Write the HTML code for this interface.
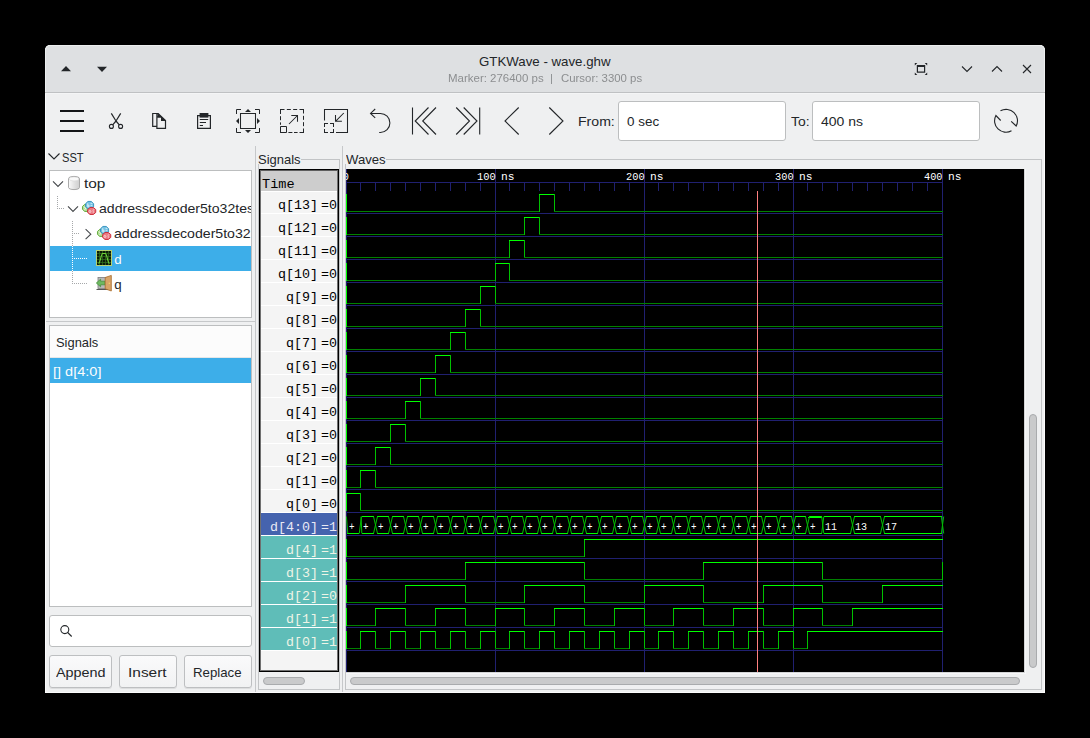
<!DOCTYPE html>
<html lang="en"><head><meta charset="utf-8"><title>GTKWave - wave.ghw</title>
<style>
html,body{margin:0;padding:0;background:#000;}
body{width:1090px;height:738px;position:relative;overflow:hidden;font-family:"Liberation Sans",sans-serif;color:#232629;}
.abs{position:absolute;}
.win{position:absolute;left:45px;top:45px;width:1000px;height:648px;background:#eff0f1;border-radius:5px 5px 0 0;overflow:hidden;}
.titlebar{position:absolute;left:0;top:0;width:1000px;height:47px;background:#dee0e2;border-bottom:1px solid #bfc1c3;box-shadow:inset 0 1px 0 #eceeef, inset 1px 0 0 #eceeef, inset -1px 0 0 #eceeef;border-radius:5px 5px 0 0;box-sizing:border-box;height:48px;}
.t{position:absolute;white-space:pre;line-height:20px;height:20px;transform-origin:0 0;}
.fm{font-family:"Liberation Mono",monospace;}
.box{position:absolute;background:#fff;border:1px solid #bcbebf;box-sizing:border-box;}
.entry{position:absolute;background:#fff;border:1px solid #bcbebf;border-radius:3px;box-sizing:border-box;}
.btn{position:absolute;box-sizing:border-box;border:1px solid #bdbfc1;border-radius:3px;background:linear-gradient(#fafafb,#f1f2f3);box-shadow:0 1px 0 rgba(0,0,0,0.08);}
.sel{position:absolute;background:#3daee9;}
.thumb{position:absolute;box-sizing:border-box;background:#c9cacb;border:1px solid #a9abad;border-radius:4px;}
.ln{position:absolute;background:#c4c6c8;}
svg{position:absolute;overflow:visible;}
</style></head><body>
<div class="win"><div class="titlebar"></div></div>
<span class="t" style="left:478.88px;top:52.00px;font-size:13.3px;color:#232629;transform:scale(0.9981,1.0000);">GTKWave - wave.ghw</span>
<svg width="1090" height="738" viewBox="0 0 1090 738" style="left:0;top:0" fill="none" stroke="#232629" stroke-width="1.1">
<path d="M61 71.2 L66 66 L71 71.2 Z" fill="#232629" stroke="none"/>
<path d="M97 66.8 L107 66.8 L102 72 Z" fill="#232629" stroke="none"/>
<path d="M914.8 63 H917.3 L914.8 65.5 Z M927.2 63 H924.7 L927.2 65.5 Z M914.8 75 H917.3 L914.8 72.5 Z M927.2 75 H924.7 L927.2 72.5 Z" fill="#232629" stroke="none"/>
<path d="M917.4 65.5 H924.6 V72.2 H917.4 Z M917.4 66.3 H924.6" stroke-width="1.2"/>
<path d="M962 66.5 L967 71.5 L972 66.5"/>
<path d="M992 71.5 L997 66.5 L1002 71.5"/>
<path d="M1023 65 L1031 73 M1031 65 L1023 73"/>
<path d="M60 110.9 H84 M60 120.9 H84 M60 130.9 H84" stroke-width="2" stroke="#141618"/>
<path d="M111.3 113.4 L116 121 L119.3 124.9 M120.7 113.4 L116 121 L112.7 124.9" stroke-width="1.2" stroke-linejoin="round"/>
<circle cx="111.4" cy="126.4" r="2" stroke-width="1.1"/><circle cx="120.6" cy="126.4" r="2" stroke-width="1.1"/>
<path d="M156.5 126.4 H152.7 V113.5 H158.2 L165.5 120.6 V128.4 H156.9 V113.6 M156.9 116.9 H161.2" stroke-width="1.2"/>
<path d="M157.4 113.1 L166 121.1 H161 V117.5 H157.4 Z" fill="#232629" stroke="none"/>
<path d="M197.6 115.6 H210.4 V128.4 H197.6 Z" stroke-width="1.2"/>
<path d="M199.6 113 H208.4 V117.6 H199.6 Z" fill="#232629" stroke="none"/>
<path d="M199.8 119.5 H208.2 M199.8 122.5 H206 M199.8 125.5 H203" stroke-width="1"/>
<path d="M236.5 114 V109.5 H241 M255 109.5 H259.5 V114 M259.5 128 V132.5 H255 M241 132.5 H236.5 V128" stroke-width="1"/>
<path d="M240.5 113.5 H255.5 V128.5 H240.5 Z" stroke-width="1.05"/>
<path d="M245 112 L248 109 L251 112 Z M245 130 L248 133 L251 130 Z M239 118 L236 121 L239 124 Z M257 118 L260 121 L257 124 Z" fill="#232629" stroke="none"/>
<path d="M280.5 109.5 H303.5 M303.5 109.5 V132.5" stroke-dasharray="4 2.333" stroke-width="1" stroke-linecap="butt"/>
<path d="M280.5 109.5 V114 M280.5 116.2 V120.2 M280.5 122.4 V124.8 M288.4 132.5 H292.4 M294 132.5 H297.6 M299.5 132.5 H303.5" stroke-width="1"/>
<path d="M280 109.5 H281 M303 109.5 H304 M280 132.5 H281 M303 132.5 H304" stroke-width="1"/>
<path d="M280.5 126.5 H286.5 V132.5 H280.5 Z" stroke-width="1" fill="#eff0f1"/>
<path d="M289 124 L297.5 115.5 M291.3 115.5 H297.5 V121.7" stroke-width="1.05"/>
<path d="M324.5 120.6 V109.5 H347.5 V132.5 H336" stroke-width="1.05"/>
<path d="M324.5 123.5 H333.5 M333.5 123.5 V132.5 M333.5 132.5 H324.5 M324.5 132.5 V123.5" stroke-dasharray="3.5 2" stroke-width="1"/>
<path d="M324 123.5 H325 M333 123.5 H334 M324 132.5 H325 M333 132.5 H334" stroke-width="1"/>
<path d="M343.8 113 L335.5 121.3 M335.5 115.1 V121.3 H341.9" stroke-width="1.05"/>
<path d="M375.2 109 L370.5 113.4 L375.2 117.8 M371 113.4 H380.4 A9.5 9.5 0 0 1 380.4 132.4 H379.2" stroke-width="1.05"/>
<path d="M412.5 107.5 V134.5 M428.5 107.5 L415.2 121 L428.5 134.5 M436 107.5 L422.7 121 L436 134.5" stroke-width="1.1"/>
<path d="M479.7 107.5 V134.5 M463.7 107.5 L477 121 L463.7 134.5 M456.2 107.5 L469.5 121 L456.2 134.5" stroke-width="1.1"/>
<path d="M518.7 107.5 L505 121 L518.7 134.5" stroke-width="1.1"/>
<path d="M549.3 107.5 L563 121 L549.3 134.5" stroke-width="1.1"/>
<path d="M1000.5 110.8 A11.4 11.4 0 0 1 1016.2 126 L1011.2 121.3 M1011.5 130.8 A11.4 11.4 0 0 1 995.9 115.5 L1000.7 120.5" stroke-width="1.1" stroke-linejoin="miter"/>
</svg>
<span class="t" style="left:578.41px;top:112.00px;font-size:13.3px;color:#232629;transform:scale(1.0595,1.0000);">From:</span>
<div class="entry" style="left:618px;top:101px;width:168px;height:40px"></div>
<span class="t" style="left:626.89px;top:112.00px;font-size:13.3px;color:#232629;transform:scale(1.0105,1.0000);">0 sec</span>
<span class="t" style="left:791.04px;top:112.00px;font-size:13.3px;color:#232629;transform:scale(1.0462,1.0000);">To:</span>
<div class="entry" style="left:812px;top:101px;width:168px;height:40px"></div>
<span class="t" style="left:820.94px;top:112.00px;font-size:13.3px;color:#232629;transform:scale(1.0530,1.0000);">400 ns</span>
<svg width="1090" height="738" viewBox="0 0 1090 738" style="left:0;top:0" fill="none" stroke="#232629" stroke-width="1.1">
<path d="M48.5 153.5 L54 159 L59.5 153.5"/>
</svg>
<span class="t" style="left:61.88px;top:148.00px;font-size:13.3px;color:#232629;transform:scale(0.8362,1.0000);">SST</span>
<div class="box" style="left:49px;top:170px;width:203px;height:148px;overflow:hidden">
</div>
<div class="sel" style="left:50px;top:246px;width:201px;height:25px"></div>
<svg width="1090" height="738" viewBox="0 0 1090 738" style="left:0;top:0" fill="none">
<path d="M57.5 196 V209" stroke="#a6a8aa" stroke-width="1" stroke-dasharray="1 1" shape-rendering="crispEdges"/>
<path d="M57 208.5 H65" stroke="#a6a8aa" stroke-width="1" stroke-dasharray="1 1" shape-rendering="crispEdges"/>
<path d="M72.5 221 V246" stroke="#a6a8aa" stroke-width="1" stroke-dasharray="1 1" shape-rendering="crispEdges"/>
<path d="M72.5 271 V284" stroke="#a6a8aa" stroke-width="1" stroke-dasharray="1 1" shape-rendering="crispEdges"/>
<path d="M72.5 246 V271" stroke="#ffffff" stroke-width="1" stroke-dasharray="1 1" shape-rendering="crispEdges"/>
<path d="M72 233.5 H80" stroke="#a6a8aa" stroke-width="1" stroke-dasharray="1 1" shape-rendering="crispEdges"/>
<path d="M72 258.5 H88" stroke="#ffffff" stroke-width="1" stroke-dasharray="1 1" shape-rendering="crispEdges"/>
<path d="M72 283.5 H88" stroke="#a6a8aa" stroke-width="1" stroke-dasharray="1 1" shape-rendering="crispEdges"/>
<path d="M53 181.3 L58 186.5 L63 181.3 M68 206.3 L73 211.5 L78 206.3 M85.6 229.2 L90.8 234.2 L85.6 239.2" stroke="#45484b" stroke-width="1.1"/>
<defs><linearGradient id="cyl" x1="0" x2="1" y1="0" y2="0"><stop offset="0" stop-color="#fbfbfb"/><stop offset="0.6" stop-color="#dedede"/><stop offset="1" stop-color="#cfcfcf"/></linearGradient></defs>
<path d="M68.5 178.6 C68.5 175.7 79.5 175.7 79.5 178.6 V187.4 C79.5 190.3 68.5 190.3 68.5 187.4 Z" fill="url(#cyl)" stroke="#9c9c9c" stroke-width="0.85"/>
<ellipse cx="74" cy="178.9" rx="4.8" ry="2" fill="#fafafa" stroke="#cfcfcf" stroke-width="0.5"/>
<polygon points="90.12,209.36 87.88,211.43 84.72,211.43 82.48,209.36 82.48,206.44 84.72,204.37 87.88,204.37 90.12,206.44" fill="#b2df97" stroke="#5aa532" stroke-width="0.9" stroke-linejoin="round"/><path d="M84.2 206.6 l1.6 2.2 M84.6 209.9 l1.2 -1.6" stroke="#eef8e6" stroke-width="0.9" fill="none"/><polygon points="93.62,206.83 91.26,209.07 87.94,209.07 85.58,206.83 85.58,203.67 87.94,201.43 91.26,201.43 93.62,203.67" fill="#74c2e4" stroke="#2e8dbb" stroke-width="0.9" stroke-linejoin="round"/><path d="M87.7 203.2 v3.6 M87.7 205.2 h1.3 v1.6 h-1.3 M90.6 203.4 h1.8 M90.6 205.4 h1.8" stroke="#e4f3fa" stroke-width="0.8" fill="none"/><polygon points="95.76,212.44 93.38,214.48 90.02,214.48 87.64,212.44 87.64,209.56 90.02,207.52 93.38,207.52 95.76,209.56" fill="#ed7a83" stroke="#c8232f" stroke-width="0.9" stroke-linejoin="round"/><circle cx="89.9" cy="211.5" r="1.0" stroke="#fbdfe1" stroke-width="0.8" fill="none"/><path d="M92.6 210.4 l1.6 -0.8 M93.3 211.2 v1.6" stroke="#fbdfe1" stroke-width="0.8" fill="none"/>
<polygon points="105.12,234.36 102.88,236.43 99.72,236.43 97.48,234.36 97.48,231.44 99.72,229.37 102.88,229.37 105.12,231.44" fill="#b2df97" stroke="#5aa532" stroke-width="0.9" stroke-linejoin="round"/><path d="M99.2 231.6 l1.6 2.2 M99.6 234.9 l1.2 -1.6" stroke="#eef8e6" stroke-width="0.9" fill="none"/><polygon points="108.62,231.83 106.26,234.07 102.94,234.07 100.58,231.83 100.58,228.67 102.94,226.43 106.26,226.43 108.62,228.67" fill="#74c2e4" stroke="#2e8dbb" stroke-width="0.9" stroke-linejoin="round"/><path d="M102.7 228.2 v3.6 M102.7 230.2 h1.3 v1.6 h-1.3 M105.6 228.4 h1.8 M105.6 230.4 h1.8" stroke="#e4f3fa" stroke-width="0.8" fill="none"/><polygon points="110.76,237.44 108.38,239.48 105.02,239.48 102.64,237.44 102.64,234.56 105.02,232.52 108.38,232.52 110.76,234.56" fill="#ed7a83" stroke="#c8232f" stroke-width="0.9" stroke-linejoin="round"/><circle cx="104.9" cy="236.5" r="1.0" stroke="#fbdfe1" stroke-width="0.8" fill="none"/><path d="M107.6 235.4 l1.6 -0.8 M108.3 236.2 v1.6" stroke="#fbdfe1" stroke-width="0.8" fill="none"/>
<rect x="96.5" y="250.5" width="15" height="15" fill="#0c1a08" stroke="#b4d070" stroke-width="1"/>
<path d="M99.5 251 V265 M97 253.5 H111 M102.5 251 V265 M97 256.5 H111 M105.5 251 V265 M97 259.5 H111 M108.5 251 V265 M97 262.5 H111" stroke="#2f6a1c" stroke-width="0.8"/>
<path d="M98.5 263.5 C100.5 263 101 254 102.5 253.5 H105.5 C107 254 107.5 263 109.5 263.5" stroke="#6fd23a" stroke-width="1.1"/>
<rect x="98" y="277.5" width="9" height="11" fill="#b9b9b9" stroke="#7d7d7d" stroke-width="0.8"/>
<path d="M96.5 289.5 H108" stroke="#555" stroke-width="1"/>
<path d="M96.3 283 L100.6 279.2 V281.2 H105 V284.8 H100.6 V286.8 Z" fill="#6db860" stroke="#3f8c35" stroke-width="0.7"/>
<path d="M105.2 277.5 L111.3 275.4 V291 L105.2 288.8 Z" fill="#d8a468" stroke="#a76a2a" stroke-width="0.8"/>
<circle cx="109.3" cy="283.3" r="0.7" fill="#f6d36a"/>
</svg>
<span class="t" style="left:84.11px;top:174.40px;font-size:13.3px;color:#232629;transform:scale(1.1606,1.0000);">top</span>
<div class="abs" style="left:50px;top:171px;width:201px;height:146px;overflow:hidden">
<span class="t" style="left:48.97px;top:28.40px;font-size:13.3px;color:#232629;transform:scale(1.0595,1.0000);">addressdecoder5to32test</span>
<span class="t" style="left:63.97px;top:53.40px;font-size:13.3px;color:#232629;transform:scale(1.0627,1.0000);">addressdecoder5to32</span>
</div>
<span class="t" style="left:114.30px;top:250.00px;font-size:13.3px;color:#fcfcfc;">d</span>
<span class="t" style="left:114.30px;top:275.00px;font-size:13.3px;color:#232629;">q</span>
<div class="ln" style="left:46px;top:321px;width:209px;height:1px;background:#c6c8ca"></div>
<div class="box" style="left:49px;top:325px;width:203px;height:282px"></div>
<div class="abs" style="left:50px;top:326px;width:201px;height:31px;background:#fcfcfc;border-bottom:1px solid #e6e7e8"></div>
<span class="t" style="left:55.99px;top:333.00px;font-size:13.3px;color:#232629;transform:scale(0.9694,1.0000);">Signals</span>
<div class="sel" style="left:50px;top:358px;width:201px;height:25px"></div>
<span class="t" style="left:52.94px;top:362.00px;font-size:13.3px;color:#fcfcfc;transform:scale(1.0918,1.0000);">[] d[4:0]</span>
<div class="entry" style="left:49px;top:615px;width:203px;height:32px"></div>
<svg width="1090" height="738" viewBox="0 0 1090 738" style="left:0;top:0" fill="none" stroke="#232629" stroke-width="1.1"><circle cx="64.8" cy="629.6" r="4"/><path d="M67.7 632.5 L71.7 636.5"/></svg>
<div class="btn" style="left:49px;top:655px;width:63px;height:33px"></div>
<span class="t" style="left:56.20px;top:662.60px;font-size:13.3px;color:#232629;transform:scale(1.0822,1.0000);">Append</span>
<div class="btn" style="left:119px;top:655px;width:58px;height:33px"></div>
<span class="t" style="left:128.05px;top:662.60px;font-size:13.3px;color:#232629;transform:scale(1.1625,1.0000);">Insert</span>
<div class="btn" style="left:184px;top:655px;width:68px;height:33px"></div>
<span class="t" style="left:193.28px;top:662.60px;font-size:13.3px;color:#232629;transform:scale(0.9957,1.0000);">Replace</span>
<div class="ln" style="left:255px;top:146px;width:1px;height:547px;background:#c6c8ca"></div>
<div class="ln" style="left:342px;top:146px;width:1px;height:547px;background:#c6c8ca"></div>
<span class="t" style="left:257.99px;top:150.00px;font-size:13.3px;color:#232629;transform:scale(0.9765,1.0000);">Signals</span>
<div class="ln" style="left:301px;top:159px;width:39px;height:1px;background:#c2c4c6"></div>
<div class="ln" style="left:258px;top:164px;width:1px;height:526px;background:#c2c4c6"></div>
<div class="ln" style="left:339px;top:159px;width:1px;height:531px;background:#c2c4c6"></div>
<div class="ln" style="left:258px;top:689px;width:82px;height:1px;background:#c2c4c6"></div>
<div class="abs" style="left:259px;top:169px;width:80px;height:503px;box-sizing:border-box;border:1px solid #000;background:#f4f4f4"></div>
<div class="abs" style="left:260px;top:170px;width:78px;height:501px;box-sizing:border-box;border:1px solid #707070;border-top-color:#5e5e5e"></div>
<div class="abs" style="left:261px;top:171px;width:76px;height:20px;background:#cdcdcd"></div>
<div class="abs" style="left:261px;top:191px;width:76px;height:1px;background:#fff"></div>
<span class="t fm" style="left:261.89px;top:175.00px;font-size:13.33px;color:#000;transform:scale(1.0188,1.0000);">Time</span>
<div class="abs" style="left:261px;top:213px;width:76px;height:1px;background:#fff"></div>
<span class="t fm" style="left:278.02px;top:196.00px;font-size:13.33px;color:#000;">q[13]</span>
<span class="t fm" style="left:320.95px;top:196.00px;font-size:13.33px;color:#000;">=0</span>
<div class="abs" style="left:261px;top:236px;width:76px;height:1px;background:#fff"></div>
<span class="t fm" style="left:278.02px;top:219.00px;font-size:13.33px;color:#000;">q[12]</span>
<span class="t fm" style="left:320.95px;top:219.00px;font-size:13.33px;color:#000;">=0</span>
<div class="abs" style="left:261px;top:259px;width:76px;height:1px;background:#fff"></div>
<span class="t fm" style="left:278.02px;top:242.00px;font-size:13.33px;color:#000;">q[11]</span>
<span class="t fm" style="left:320.95px;top:242.00px;font-size:13.33px;color:#000;">=0</span>
<div class="abs" style="left:261px;top:282px;width:76px;height:1px;background:#fff"></div>
<span class="t fm" style="left:278.02px;top:265.00px;font-size:13.33px;color:#000;">q[10]</span>
<span class="t fm" style="left:320.95px;top:265.00px;font-size:13.33px;color:#000;">=0</span>
<div class="abs" style="left:261px;top:305px;width:76px;height:1px;background:#fff"></div>
<span class="t fm" style="left:286.02px;top:288.00px;font-size:13.33px;color:#000;">q[9]</span>
<span class="t fm" style="left:320.95px;top:288.00px;font-size:13.33px;color:#000;">=0</span>
<div class="abs" style="left:261px;top:328px;width:76px;height:1px;background:#fff"></div>
<span class="t fm" style="left:286.02px;top:311.00px;font-size:13.33px;color:#000;">q[8]</span>
<span class="t fm" style="left:320.95px;top:311.00px;font-size:13.33px;color:#000;">=0</span>
<div class="abs" style="left:261px;top:351px;width:76px;height:1px;background:#fff"></div>
<span class="t fm" style="left:286.02px;top:334.00px;font-size:13.33px;color:#000;">q[7]</span>
<span class="t fm" style="left:320.95px;top:334.00px;font-size:13.33px;color:#000;">=0</span>
<div class="abs" style="left:261px;top:374px;width:76px;height:1px;background:#fff"></div>
<span class="t fm" style="left:286.02px;top:357.00px;font-size:13.33px;color:#000;">q[6]</span>
<span class="t fm" style="left:320.95px;top:357.00px;font-size:13.33px;color:#000;">=0</span>
<div class="abs" style="left:261px;top:397px;width:76px;height:1px;background:#fff"></div>
<span class="t fm" style="left:286.02px;top:380.00px;font-size:13.33px;color:#000;">q[5]</span>
<span class="t fm" style="left:320.95px;top:380.00px;font-size:13.33px;color:#000;">=0</span>
<div class="abs" style="left:261px;top:420px;width:76px;height:1px;background:#fff"></div>
<span class="t fm" style="left:286.02px;top:403.00px;font-size:13.33px;color:#000;">q[4]</span>
<span class="t fm" style="left:320.95px;top:403.00px;font-size:13.33px;color:#000;">=0</span>
<div class="abs" style="left:261px;top:443px;width:76px;height:1px;background:#fff"></div>
<span class="t fm" style="left:286.02px;top:426.00px;font-size:13.33px;color:#000;">q[3]</span>
<span class="t fm" style="left:320.95px;top:426.00px;font-size:13.33px;color:#000;">=0</span>
<div class="abs" style="left:261px;top:466px;width:76px;height:1px;background:#fff"></div>
<span class="t fm" style="left:286.02px;top:449.00px;font-size:13.33px;color:#000;">q[2]</span>
<span class="t fm" style="left:320.95px;top:449.00px;font-size:13.33px;color:#000;">=0</span>
<div class="abs" style="left:261px;top:489px;width:76px;height:1px;background:#fff"></div>
<span class="t fm" style="left:286.02px;top:472.00px;font-size:13.33px;color:#000;">q[1]</span>
<span class="t fm" style="left:320.95px;top:472.00px;font-size:13.33px;color:#000;">=0</span>
<div class="abs" style="left:261px;top:512px;width:76px;height:1px;background:#fff"></div>
<span class="t fm" style="left:286.02px;top:495.00px;font-size:13.33px;color:#000;">q[0]</span>
<span class="t fm" style="left:320.95px;top:495.00px;font-size:13.33px;color:#000;">=0</span>
<div class="abs" style="left:261px;top:513px;width:76px;height:22px;background:#4563ae"></div>
<div class="abs" style="left:261px;top:535px;width:76px;height:1px;background:#fff"></div>
<span class="t fm" style="left:270.02px;top:518.00px;font-size:13.33px;color:#e8e8f4;">d[4:0]</span>
<span class="t fm" style="left:320.96px;top:518.00px;font-size:13.33px;color:#e8e8f4;transform:scale(0.9915,1.0000);">=1</span>
<div class="abs" style="left:261px;top:536px;width:76px;height:22px;background:#5fbdb8"></div>
<div class="abs" style="left:261px;top:558px;width:76px;height:1px;background:#fff"></div>
<span class="t fm" style="left:286.02px;top:541.00px;font-size:13.33px;color:#eef4e6;">d[4]</span>
<span class="t fm" style="left:320.96px;top:541.00px;font-size:13.33px;color:#eef4e6;transform:scale(0.9915,1.0000);">=1</span>
<div class="abs" style="left:261px;top:559px;width:76px;height:22px;background:#5fbdb8"></div>
<div class="abs" style="left:261px;top:581px;width:76px;height:1px;background:#fff"></div>
<span class="t fm" style="left:286.02px;top:564.00px;font-size:13.33px;color:#eef4e6;">d[3]</span>
<span class="t fm" style="left:320.96px;top:564.00px;font-size:13.33px;color:#eef4e6;transform:scale(0.9915,1.0000);">=1</span>
<div class="abs" style="left:261px;top:582px;width:76px;height:22px;background:#5fbdb8"></div>
<div class="abs" style="left:261px;top:604px;width:76px;height:1px;background:#fff"></div>
<span class="t fm" style="left:286.02px;top:587.00px;font-size:13.33px;color:#eef4e6;">d[2]</span>
<span class="t fm" style="left:320.95px;top:587.00px;font-size:13.33px;color:#eef4e6;">=0</span>
<div class="abs" style="left:261px;top:605px;width:76px;height:22px;background:#5fbdb8"></div>
<div class="abs" style="left:261px;top:627px;width:76px;height:1px;background:#fff"></div>
<span class="t fm" style="left:286.02px;top:610.00px;font-size:13.33px;color:#eef4e6;">d[1]</span>
<span class="t fm" style="left:320.96px;top:610.00px;font-size:13.33px;color:#eef4e6;transform:scale(0.9915,1.0000);">=1</span>
<div class="abs" style="left:261px;top:628px;width:76px;height:22px;background:#5fbdb8"></div>
<div class="abs" style="left:261px;top:650px;width:76px;height:1px;background:#fff"></div>
<span class="t fm" style="left:286.02px;top:633.00px;font-size:13.33px;color:#eef4e6;">d[0]</span>
<span class="t fm" style="left:320.96px;top:633.00px;font-size:13.33px;color:#eef4e6;transform:scale(0.9915,1.0000);">=1</span>
<div class="thumb" style="left:263px;top:677px;width:42px;height:8px"></div>
<span class="t" style="left:346.08px;top:150.00px;font-size:13.3px;color:#232629;transform:scale(0.9873,1.0000);">Waves</span>
<div class="ln" style="left:386px;top:159px;width:656px;height:1px;background:#c2c4c6"></div>
<div class="ln" style="left:345px;top:164px;width:1px;height:526px;background:#c2c4c6"></div>
<div class="ln" style="left:1041px;top:159px;width:1px;height:531px;background:#c2c4c6"></div>
<div class="ln" style="left:345px;top:689px;width:697px;height:1px;background:#c2c4c6"></div>
<div class="thumb" style="left:350px;top:677px;width:670px;height:8px"></div>
<div class="thumb" style="left:1029px;top:414px;width:8px;height:254px"></div>
<div class="abs" style="left:346px;top:169px;width:680px;height:505px;background:#f6f7f8"></div>
<div class="abs" style="left:346px;top:169px;width:679px;height:504px;background:#d4d5d6"></div>
<svg width="678" height="503" viewBox="346 169 678 503" style="left:346px;top:169px;overflow:hidden" shape-rendering="crispEdges">
<rect x="346" y="169" width="678" height="503" fill="#000"/>
<rect x="346" y="182" width="597" height="1" fill="#202070"/>
<rect x="346" y="169" width="1" height="503" fill="#202070"/>
<rect x="360" y="182" width="1" height="9" fill="#202070"/>
<rect x="375" y="182" width="1" height="9" fill="#202070"/>
<rect x="390" y="182" width="1" height="9" fill="#202070"/>
<rect x="405" y="182" width="1" height="9" fill="#202070"/>
<rect x="420" y="182" width="1" height="9" fill="#202070"/>
<rect x="435" y="182" width="1" height="9" fill="#202070"/>
<rect x="450" y="182" width="1" height="9" fill="#202070"/>
<rect x="465" y="182" width="1" height="9" fill="#202070"/>
<rect x="480" y="182" width="1" height="9" fill="#202070"/>
<rect x="495" y="169" width="1" height="503" fill="#202070"/>
<rect x="509" y="182" width="1" height="9" fill="#202070"/>
<rect x="524" y="182" width="1" height="9" fill="#202070"/>
<rect x="539" y="182" width="1" height="9" fill="#202070"/>
<rect x="554" y="182" width="1" height="9" fill="#202070"/>
<rect x="569" y="182" width="1" height="9" fill="#202070"/>
<rect x="584" y="182" width="1" height="9" fill="#202070"/>
<rect x="599" y="182" width="1" height="9" fill="#202070"/>
<rect x="614" y="182" width="1" height="9" fill="#202070"/>
<rect x="629" y="182" width="1" height="9" fill="#202070"/>
<rect x="644" y="169" width="1" height="503" fill="#202070"/>
<rect x="658" y="182" width="1" height="9" fill="#202070"/>
<rect x="673" y="182" width="1" height="9" fill="#202070"/>
<rect x="688" y="182" width="1" height="9" fill="#202070"/>
<rect x="703" y="182" width="1" height="9" fill="#202070"/>
<rect x="718" y="182" width="1" height="9" fill="#202070"/>
<rect x="733" y="182" width="1" height="9" fill="#202070"/>
<rect x="748" y="182" width="1" height="9" fill="#202070"/>
<rect x="763" y="182" width="1" height="9" fill="#202070"/>
<rect x="778" y="182" width="1" height="9" fill="#202070"/>
<rect x="793" y="169" width="1" height="503" fill="#202070"/>
<rect x="807" y="182" width="1" height="9" fill="#202070"/>
<rect x="822" y="182" width="1" height="9" fill="#202070"/>
<rect x="837" y="182" width="1" height="9" fill="#202070"/>
<rect x="852" y="182" width="1" height="9" fill="#202070"/>
<rect x="867" y="182" width="1" height="9" fill="#202070"/>
<rect x="882" y="182" width="1" height="9" fill="#202070"/>
<rect x="897" y="182" width="1" height="9" fill="#202070"/>
<rect x="912" y="182" width="1" height="9" fill="#202070"/>
<rect x="927" y="182" width="1" height="9" fill="#202070"/>
<rect x="942" y="169" width="1" height="503" fill="#202070"/>
<rect x="346" y="213" width="597" height="1" fill="#202070"/>
<rect x="346" y="236" width="597" height="1" fill="#202070"/>
<rect x="346" y="259" width="597" height="1" fill="#202070"/>
<rect x="346" y="282" width="597" height="1" fill="#202070"/>
<rect x="346" y="305" width="597" height="1" fill="#202070"/>
<rect x="346" y="328" width="597" height="1" fill="#202070"/>
<rect x="346" y="351" width="597" height="1" fill="#202070"/>
<rect x="346" y="374" width="597" height="1" fill="#202070"/>
<rect x="346" y="397" width="597" height="1" fill="#202070"/>
<rect x="346" y="420" width="597" height="1" fill="#202070"/>
<rect x="346" y="443" width="597" height="1" fill="#202070"/>
<rect x="346" y="466" width="597" height="1" fill="#202070"/>
<rect x="346" y="489" width="597" height="1" fill="#202070"/>
<rect x="346" y="512" width="597" height="1" fill="#202070"/>
<rect x="346" y="535" width="597" height="1" fill="#202070"/>
<rect x="346" y="558" width="597" height="1" fill="#202070"/>
<rect x="346" y="581" width="597" height="1" fill="#202070"/>
<rect x="346" y="604" width="597" height="1" fill="#202070"/>
<rect x="346" y="627" width="597" height="1" fill="#202070"/>
<rect x="346" y="650" width="597" height="1" fill="#202070"/>
<rect x="346" y="211" width="194" height="1" fill="#008000"/><rect x="539" y="194" width="1" height="18" fill="#00c000"/><rect x="539" y="194" width="16" height="1" fill="#00ff00"/><rect x="554" y="194" width="1" height="18" fill="#00c000"/><rect x="554" y="211" width="389" height="1" fill="#008000"/>
<rect x="346" y="194" width="1" height="18" fill="#00ff00"/>
<rect x="346" y="234" width="179" height="1" fill="#008000"/><rect x="524" y="217" width="1" height="18" fill="#00c000"/><rect x="524" y="217" width="16" height="1" fill="#00ff00"/><rect x="539" y="217" width="1" height="18" fill="#00c000"/><rect x="539" y="234" width="404" height="1" fill="#008000"/>
<rect x="346" y="217" width="1" height="18" fill="#00ff00"/>
<rect x="346" y="257" width="164" height="1" fill="#008000"/><rect x="509" y="240" width="1" height="18" fill="#00c000"/><rect x="509" y="240" width="16" height="1" fill="#00ff00"/><rect x="524" y="240" width="1" height="18" fill="#00c000"/><rect x="524" y="257" width="419" height="1" fill="#008000"/>
<rect x="346" y="240" width="1" height="18" fill="#00ff00"/>
<rect x="346" y="280" width="150" height="1" fill="#008000"/><rect x="495" y="263" width="1" height="18" fill="#00c000"/><rect x="495" y="263" width="15" height="1" fill="#00ff00"/><rect x="509" y="263" width="1" height="18" fill="#00c000"/><rect x="509" y="280" width="434" height="1" fill="#008000"/>
<rect x="346" y="263" width="1" height="18" fill="#00ff00"/>
<rect x="346" y="303" width="135" height="1" fill="#008000"/><rect x="480" y="286" width="1" height="18" fill="#00c000"/><rect x="480" y="286" width="16" height="1" fill="#00ff00"/><rect x="495" y="286" width="1" height="18" fill="#00c000"/><rect x="495" y="303" width="448" height="1" fill="#008000"/>
<rect x="346" y="286" width="1" height="18" fill="#00ff00"/>
<rect x="346" y="326" width="120" height="1" fill="#008000"/><rect x="465" y="309" width="1" height="18" fill="#00c000"/><rect x="465" y="309" width="16" height="1" fill="#00ff00"/><rect x="480" y="309" width="1" height="18" fill="#00c000"/><rect x="480" y="326" width="463" height="1" fill="#008000"/>
<rect x="346" y="309" width="1" height="18" fill="#00ff00"/>
<rect x="346" y="349" width="105" height="1" fill="#008000"/><rect x="450" y="332" width="1" height="18" fill="#00c000"/><rect x="450" y="332" width="16" height="1" fill="#00ff00"/><rect x="465" y="332" width="1" height="18" fill="#00c000"/><rect x="465" y="349" width="478" height="1" fill="#008000"/>
<rect x="346" y="332" width="1" height="18" fill="#00ff00"/>
<rect x="346" y="372" width="90" height="1" fill="#008000"/><rect x="435" y="355" width="1" height="18" fill="#00c000"/><rect x="435" y="355" width="16" height="1" fill="#00ff00"/><rect x="450" y="355" width="1" height="18" fill="#00c000"/><rect x="450" y="372" width="493" height="1" fill="#008000"/>
<rect x="346" y="355" width="1" height="18" fill="#00ff00"/>
<rect x="346" y="395" width="75" height="1" fill="#008000"/><rect x="420" y="378" width="1" height="18" fill="#00c000"/><rect x="420" y="378" width="16" height="1" fill="#00ff00"/><rect x="435" y="378" width="1" height="18" fill="#00c000"/><rect x="435" y="395" width="508" height="1" fill="#008000"/>
<rect x="346" y="378" width="1" height="18" fill="#00ff00"/>
<rect x="346" y="418" width="60" height="1" fill="#008000"/><rect x="405" y="401" width="1" height="18" fill="#00c000"/><rect x="405" y="401" width="16" height="1" fill="#00ff00"/><rect x="420" y="401" width="1" height="18" fill="#00c000"/><rect x="420" y="418" width="523" height="1" fill="#008000"/>
<rect x="346" y="401" width="1" height="18" fill="#00ff00"/>
<rect x="346" y="441" width="45" height="1" fill="#008000"/><rect x="390" y="424" width="1" height="18" fill="#00c000"/><rect x="390" y="424" width="16" height="1" fill="#00ff00"/><rect x="405" y="424" width="1" height="18" fill="#00c000"/><rect x="405" y="441" width="538" height="1" fill="#008000"/>
<rect x="346" y="424" width="1" height="18" fill="#00ff00"/>
<rect x="346" y="464" width="30" height="1" fill="#008000"/><rect x="375" y="447" width="1" height="18" fill="#00c000"/><rect x="375" y="447" width="16" height="1" fill="#00ff00"/><rect x="390" y="447" width="1" height="18" fill="#00c000"/><rect x="390" y="464" width="553" height="1" fill="#008000"/>
<rect x="346" y="447" width="1" height="18" fill="#00ff00"/>
<rect x="346" y="487" width="15" height="1" fill="#008000"/><rect x="360" y="470" width="1" height="18" fill="#00c000"/><rect x="360" y="470" width="16" height="1" fill="#00ff00"/><rect x="375" y="470" width="1" height="18" fill="#00c000"/><rect x="375" y="487" width="568" height="1" fill="#008000"/>
<rect x="346" y="470" width="1" height="18" fill="#00ff00"/>
<rect x="346" y="493" width="15" height="1" fill="#00ff00"/><rect x="360" y="493" width="1" height="18" fill="#00c000"/><rect x="360" y="510" width="583" height="1" fill="#008000"/>
<rect x="346" y="493" width="1" height="18" fill="#00ff00"/>
<rect x="346" y="556" width="239" height="1" fill="#008000"/><rect x="584" y="539" width="1" height="18" fill="#00c000"/><rect x="584" y="539" width="359" height="1" fill="#00ff00"/>
<rect x="346" y="539" width="1" height="18" fill="#00ff00"/>
<rect x="346" y="579" width="120" height="1" fill="#008000"/><rect x="465" y="562" width="1" height="18" fill="#00c000"/><rect x="465" y="562" width="120" height="1" fill="#00ff00"/><rect x="584" y="562" width="1" height="18" fill="#00c000"/><rect x="584" y="579" width="120" height="1" fill="#008000"/><rect x="703" y="562" width="1" height="18" fill="#00c000"/><rect x="703" y="562" width="120" height="1" fill="#00ff00"/><rect x="822" y="562" width="1" height="18" fill="#00c000"/><rect x="822" y="579" width="121" height="1" fill="#008000"/>
<rect x="346" y="562" width="1" height="18" fill="#00ff00"/>
<rect x="346" y="602" width="60" height="1" fill="#008000"/><rect x="405" y="585" width="1" height="18" fill="#00c000"/><rect x="405" y="585" width="61" height="1" fill="#00ff00"/><rect x="465" y="585" width="1" height="18" fill="#00c000"/><rect x="465" y="602" width="60" height="1" fill="#008000"/><rect x="524" y="585" width="1" height="18" fill="#00c000"/><rect x="524" y="585" width="61" height="1" fill="#00ff00"/><rect x="584" y="585" width="1" height="18" fill="#00c000"/><rect x="584" y="602" width="61" height="1" fill="#008000"/><rect x="644" y="585" width="1" height="18" fill="#00c000"/><rect x="644" y="585" width="60" height="1" fill="#00ff00"/><rect x="703" y="585" width="1" height="18" fill="#00c000"/><rect x="703" y="602" width="61" height="1" fill="#008000"/><rect x="763" y="585" width="1" height="18" fill="#00c000"/><rect x="763" y="585" width="60" height="1" fill="#00ff00"/><rect x="822" y="585" width="1" height="18" fill="#00c000"/><rect x="822" y="602" width="61" height="1" fill="#008000"/><rect x="882" y="585" width="1" height="18" fill="#00c000"/><rect x="882" y="585" width="61" height="1" fill="#00ff00"/>
<rect x="346" y="585" width="1" height="18" fill="#00ff00"/>
<rect x="346" y="625" width="30" height="1" fill="#008000"/><rect x="375" y="608" width="1" height="18" fill="#00c000"/><rect x="375" y="608" width="31" height="1" fill="#00ff00"/><rect x="405" y="608" width="1" height="18" fill="#00c000"/><rect x="405" y="625" width="31" height="1" fill="#008000"/><rect x="435" y="608" width="1" height="18" fill="#00c000"/><rect x="435" y="608" width="31" height="1" fill="#00ff00"/><rect x="465" y="608" width="1" height="18" fill="#00c000"/><rect x="465" y="625" width="31" height="1" fill="#008000"/><rect x="495" y="608" width="1" height="18" fill="#00c000"/><rect x="495" y="608" width="30" height="1" fill="#00ff00"/><rect x="524" y="608" width="1" height="18" fill="#00c000"/><rect x="524" y="625" width="31" height="1" fill="#008000"/><rect x="554" y="608" width="1" height="18" fill="#00c000"/><rect x="554" y="608" width="31" height="1" fill="#00ff00"/><rect x="584" y="608" width="1" height="18" fill="#00c000"/><rect x="584" y="625" width="31" height="1" fill="#008000"/><rect x="614" y="608" width="1" height="18" fill="#00c000"/><rect x="614" y="608" width="31" height="1" fill="#00ff00"/><rect x="644" y="608" width="1" height="18" fill="#00c000"/><rect x="644" y="625" width="30" height="1" fill="#008000"/><rect x="673" y="608" width="1" height="18" fill="#00c000"/><rect x="673" y="608" width="31" height="1" fill="#00ff00"/><rect x="703" y="608" width="1" height="18" fill="#00c000"/><rect x="703" y="625" width="31" height="1" fill="#008000"/><rect x="733" y="608" width="1" height="18" fill="#00c000"/><rect x="733" y="608" width="31" height="1" fill="#00ff00"/><rect x="763" y="608" width="1" height="18" fill="#00c000"/><rect x="763" y="625" width="31" height="1" fill="#008000"/><rect x="793" y="608" width="1" height="18" fill="#00c000"/><rect x="793" y="608" width="30" height="1" fill="#00ff00"/><rect x="822" y="608" width="1" height="18" fill="#00c000"/><rect x="822" y="625" width="31" height="1" fill="#008000"/><rect x="852" y="608" width="1" height="18" fill="#00c000"/><rect x="852" y="608" width="91" height="1" fill="#00ff00"/>
<rect x="346" y="608" width="1" height="18" fill="#00ff00"/>
<rect x="346" y="648" width="15" height="1" fill="#008000"/><rect x="360" y="631" width="1" height="18" fill="#00c000"/><rect x="360" y="631" width="16" height="1" fill="#00ff00"/><rect x="375" y="631" width="1" height="18" fill="#00c000"/><rect x="375" y="648" width="16" height="1" fill="#008000"/><rect x="390" y="631" width="1" height="18" fill="#00c000"/><rect x="390" y="631" width="16" height="1" fill="#00ff00"/><rect x="405" y="631" width="1" height="18" fill="#00c000"/><rect x="405" y="648" width="16" height="1" fill="#008000"/><rect x="420" y="631" width="1" height="18" fill="#00c000"/><rect x="420" y="631" width="16" height="1" fill="#00ff00"/><rect x="435" y="631" width="1" height="18" fill="#00c000"/><rect x="435" y="648" width="16" height="1" fill="#008000"/><rect x="450" y="631" width="1" height="18" fill="#00c000"/><rect x="450" y="631" width="16" height="1" fill="#00ff00"/><rect x="465" y="631" width="1" height="18" fill="#00c000"/><rect x="465" y="648" width="16" height="1" fill="#008000"/><rect x="480" y="631" width="1" height="18" fill="#00c000"/><rect x="480" y="631" width="16" height="1" fill="#00ff00"/><rect x="495" y="631" width="1" height="18" fill="#00c000"/><rect x="495" y="648" width="15" height="1" fill="#008000"/><rect x="509" y="631" width="1" height="18" fill="#00c000"/><rect x="509" y="631" width="16" height="1" fill="#00ff00"/><rect x="524" y="631" width="1" height="18" fill="#00c000"/><rect x="524" y="648" width="16" height="1" fill="#008000"/><rect x="539" y="631" width="1" height="18" fill="#00c000"/><rect x="539" y="631" width="16" height="1" fill="#00ff00"/><rect x="554" y="631" width="1" height="18" fill="#00c000"/><rect x="554" y="648" width="16" height="1" fill="#008000"/><rect x="569" y="631" width="1" height="18" fill="#00c000"/><rect x="569" y="631" width="16" height="1" fill="#00ff00"/><rect x="584" y="631" width="1" height="18" fill="#00c000"/><rect x="584" y="648" width="16" height="1" fill="#008000"/><rect x="599" y="631" width="1" height="18" fill="#00c000"/><rect x="599" y="631" width="16" height="1" fill="#00ff00"/><rect x="614" y="631" width="1" height="18" fill="#00c000"/><rect x="614" y="648" width="16" height="1" fill="#008000"/><rect x="629" y="631" width="1" height="18" fill="#00c000"/><rect x="629" y="631" width="16" height="1" fill="#00ff00"/><rect x="644" y="631" width="1" height="18" fill="#00c000"/><rect x="644" y="648" width="15" height="1" fill="#008000"/><rect x="658" y="631" width="1" height="18" fill="#00c000"/><rect x="658" y="631" width="16" height="1" fill="#00ff00"/><rect x="673" y="631" width="1" height="18" fill="#00c000"/><rect x="673" y="648" width="16" height="1" fill="#008000"/><rect x="688" y="631" width="1" height="18" fill="#00c000"/><rect x="688" y="631" width="16" height="1" fill="#00ff00"/><rect x="703" y="631" width="1" height="18" fill="#00c000"/><rect x="703" y="648" width="16" height="1" fill="#008000"/><rect x="718" y="631" width="1" height="18" fill="#00c000"/><rect x="718" y="631" width="16" height="1" fill="#00ff00"/><rect x="733" y="631" width="1" height="18" fill="#00c000"/><rect x="733" y="648" width="16" height="1" fill="#008000"/><rect x="748" y="631" width="1" height="18" fill="#00c000"/><rect x="748" y="631" width="16" height="1" fill="#00ff00"/><rect x="763" y="631" width="1" height="18" fill="#00c000"/><rect x="763" y="648" width="16" height="1" fill="#008000"/><rect x="778" y="631" width="1" height="18" fill="#00c000"/><rect x="778" y="631" width="16" height="1" fill="#00ff00"/><rect x="793" y="631" width="1" height="18" fill="#00c000"/><rect x="793" y="648" width="15" height="1" fill="#008000"/><rect x="807" y="631" width="1" height="18" fill="#00c000"/><rect x="807" y="631" width="136" height="1" fill="#00ff00"/>
<rect x="346" y="631" width="1" height="18" fill="#00ff00"/>
<rect x="942" y="562" width="1" height="18" fill="#00c000"/>
<rect x="347" y="533" width="12" height="1" fill="#00ff00"/><rect x="362" y="516" width="12" height="1" fill="#00ff00"/><rect x="362" y="533" width="12" height="1" fill="#00ff00"/><rect x="377" y="516" width="12" height="1" fill="#00ff00"/><rect x="377" y="533" width="12" height="1" fill="#00ff00"/><rect x="392" y="516" width="12" height="1" fill="#00ff00"/><rect x="392" y="533" width="12" height="1" fill="#00ff00"/><rect x="407" y="516" width="12" height="1" fill="#00ff00"/><rect x="407" y="533" width="12" height="1" fill="#00ff00"/><rect x="422" y="516" width="12" height="1" fill="#00ff00"/><rect x="422" y="533" width="12" height="1" fill="#00ff00"/><rect x="437" y="516" width="12" height="1" fill="#00ff00"/><rect x="437" y="533" width="12" height="1" fill="#00ff00"/><rect x="452" y="516" width="12" height="1" fill="#00ff00"/><rect x="452" y="533" width="12" height="1" fill="#00ff00"/><rect x="467" y="516" width="12" height="1" fill="#00ff00"/><rect x="467" y="533" width="12" height="1" fill="#00ff00"/><rect x="482" y="516" width="12" height="1" fill="#00ff00"/><rect x="482" y="533" width="12" height="1" fill="#00ff00"/><rect x="497" y="516" width="11" height="1" fill="#00ff00"/><rect x="497" y="533" width="11" height="1" fill="#00ff00"/><rect x="511" y="516" width="12" height="1" fill="#00ff00"/><rect x="511" y="533" width="12" height="1" fill="#00ff00"/><rect x="526" y="516" width="12" height="1" fill="#00ff00"/><rect x="526" y="533" width="12" height="1" fill="#00ff00"/><rect x="541" y="516" width="12" height="1" fill="#00ff00"/><rect x="541" y="533" width="12" height="1" fill="#00ff00"/><rect x="556" y="516" width="12" height="1" fill="#00ff00"/><rect x="556" y="533" width="12" height="1" fill="#00ff00"/><rect x="571" y="516" width="12" height="1" fill="#00ff00"/><rect x="571" y="533" width="12" height="1" fill="#00ff00"/><rect x="586" y="516" width="12" height="1" fill="#00ff00"/><rect x="586" y="533" width="12" height="1" fill="#00ff00"/><rect x="601" y="516" width="12" height="1" fill="#00ff00"/><rect x="601" y="533" width="12" height="1" fill="#00ff00"/><rect x="616" y="516" width="12" height="1" fill="#00ff00"/><rect x="616" y="533" width="12" height="1" fill="#00ff00"/><rect x="631" y="516" width="12" height="1" fill="#00ff00"/><rect x="631" y="533" width="12" height="1" fill="#00ff00"/><rect x="646" y="516" width="11" height="1" fill="#00ff00"/><rect x="646" y="533" width="11" height="1" fill="#00ff00"/><rect x="660" y="516" width="12" height="1" fill="#00ff00"/><rect x="660" y="533" width="12" height="1" fill="#00ff00"/><rect x="675" y="516" width="12" height="1" fill="#00ff00"/><rect x="675" y="533" width="12" height="1" fill="#00ff00"/><rect x="690" y="516" width="12" height="1" fill="#00ff00"/><rect x="690" y="533" width="12" height="1" fill="#00ff00"/><rect x="705" y="516" width="12" height="1" fill="#00ff00"/><rect x="705" y="533" width="12" height="1" fill="#00ff00"/><rect x="720" y="516" width="12" height="1" fill="#00ff00"/><rect x="720" y="533" width="12" height="1" fill="#00ff00"/><rect x="735" y="516" width="12" height="1" fill="#00ff00"/><rect x="735" y="533" width="12" height="1" fill="#00ff00"/><rect x="750" y="516" width="12" height="1" fill="#00ff00"/><rect x="750" y="533" width="12" height="1" fill="#00ff00"/><rect x="765" y="516" width="12" height="1" fill="#00ff00"/><rect x="765" y="533" width="12" height="1" fill="#00ff00"/><rect x="780" y="516" width="12" height="1" fill="#00ff00"/><rect x="780" y="533" width="12" height="1" fill="#00ff00"/><rect x="795" y="516" width="11" height="1" fill="#00ff00"/><rect x="795" y="533" width="11" height="1" fill="#00ff00"/><rect x="809" y="516" width="13" height="1" fill="#00ff00"/><rect x="809" y="533" width="13" height="1" fill="#00ff00"/><rect x="824" y="516" width="27" height="1" fill="#00ff00"/><rect x="824" y="533" width="27" height="1" fill="#00ff00"/><rect x="854" y="516" width="27" height="1" fill="#00ff00"/><rect x="854" y="533" width="27" height="1" fill="#00ff00"/><rect x="884" y="516" width="58" height="1" fill="#00ff00"/><rect x="884" y="533" width="58" height="1" fill="#00ff00"/>
<rect x="808" y="517" width="14" height="1" fill="#00ff00"/>
<path d="M373.5 516.5 L377.5 533.5 M373.5 533.5 L377.5 516.5 M388.5 516.5 L392.5 533.5 M388.5 533.5 L392.5 516.5 M403.5 516.5 L407.5 533.5 M403.5 533.5 L407.5 516.5 M418.5 516.5 L422.5 533.5 M418.5 533.5 L422.5 516.5 M433.5 516.5 L437.5 533.5 M433.5 533.5 L437.5 516.5 M448.5 516.5 L452.5 533.5 M448.5 533.5 L452.5 516.5 M463.5 516.5 L467.5 533.5 M463.5 533.5 L467.5 516.5 M478.5 516.5 L482.5 533.5 M478.5 533.5 L482.5 516.5 M493.5 516.5 L497.5 533.5 M493.5 533.5 L497.5 516.5 M507.5 516.5 L511.5 533.5 M507.5 533.5 L511.5 516.5 M522.5 516.5 L526.5 533.5 M522.5 533.5 L526.5 516.5 M537.5 516.5 L541.5 533.5 M537.5 533.5 L541.5 516.5 M552.5 516.5 L556.5 533.5 M552.5 533.5 L556.5 516.5 M567.5 516.5 L571.5 533.5 M567.5 533.5 L571.5 516.5 M582.5 516.5 L586.5 533.5 M582.5 533.5 L586.5 516.5 M597.5 516.5 L601.5 533.5 M597.5 533.5 L601.5 516.5 M612.5 516.5 L616.5 533.5 M612.5 533.5 L616.5 516.5 M627.5 516.5 L631.5 533.5 M627.5 533.5 L631.5 516.5 M642.5 516.5 L646.5 533.5 M642.5 533.5 L646.5 516.5 M656.5 516.5 L660.5 533.5 M656.5 533.5 L660.5 516.5 M671.5 516.5 L675.5 533.5 M671.5 533.5 L675.5 516.5 M686.5 516.5 L690.5 533.5 M686.5 533.5 L690.5 516.5 M701.5 516.5 L705.5 533.5 M701.5 533.5 L705.5 516.5 M716.5 516.5 L720.5 533.5 M716.5 533.5 L720.5 516.5 M731.5 516.5 L735.5 533.5 M731.5 533.5 L735.5 516.5 M746.5 516.5 L750.5 533.5 M746.5 533.5 L750.5 516.5 M761.5 516.5 L765.5 533.5 M761.5 533.5 L765.5 516.5 M776.5 516.5 L780.5 533.5 M776.5 533.5 L780.5 516.5 M791.5 516.5 L795.5 533.5 M791.5 533.5 L795.5 516.5 M805.5 516.5 L809.5 533.5 M805.5 533.5 L809.5 516.5 M821.7 516.5 L823.8 533.5 M821.7 533.5 L823.8 516.5 M850.5 516.5 L854.5 533.5 M850.5 533.5 L854.5 516.5 M880.5 516.5 L884.5 533.5 M880.5 533.5 L884.5 516.5 M941.3 516.5 L943.7 533.5 M941.3 533.5 L943.7 516.5 M359.3 533.5 L361.4 516.5 M361.1 516.5 L361.8 533.5 M346.4 516.5 L347.8 533.5" stroke="#00c000" stroke-width="1" fill="none" shape-rendering="auto"/>
<rect x="757" y="191" width="1" height="481" fill="#ff8080"/>
</svg>
<div class="abs" style="left:346px;top:169px;width:678px;height:503px;overflow:hidden">
<span class="t fm" style="left:-2.93px;top:-2.20px;font-size:11.5px;color:#fff;transform:scale(0.8533,1.0000);">0</span>
<span class="t fm" style="left:130.91px;top:-2.20px;font-size:11.5px;color:#fff;transform:scale(0.9046,1.0000);">100</span>
<span class="t fm" style="left:154.62px;top:-2.20px;font-size:11.5px;color:#fff;transform:scale(0.9768,1.0000);">ns</span>
<span class="t fm" style="left:280.03px;top:-2.20px;font-size:11.5px;color:#fff;transform:scale(0.8987,1.0000);">200</span>
<span class="t fm" style="left:303.62px;top:-2.20px;font-size:11.5px;color:#fff;transform:scale(0.9768,1.0000);">ns</span>
<span class="t fm" style="left:429.03px;top:-2.20px;font-size:11.5px;color:#fff;transform:scale(0.8987,1.0000);">300</span>
<span class="t fm" style="left:452.62px;top:-2.20px;font-size:11.5px;color:#fff;transform:scale(0.9768,1.0000);">ns</span>
<span class="t fm" style="left:578.14px;top:-2.20px;font-size:11.5px;color:#fff;transform:scale(0.8929,1.0000);">400</span>
<span class="t fm" style="left:601.62px;top:-2.20px;font-size:11.5px;color:#fff;transform:scale(0.9768,1.0000);">ns</span>
<span class="t fm" style="left:2.74px;top:349.00px;font-size:10px;color:#fff;transform:scale(0.9200,1.0000);">+</span>
<span class="t fm" style="left:17.24px;top:349.00px;font-size:10px;color:#fff;transform:scale(0.9200,1.0000);">+</span>
<span class="t fm" style="left:32.24px;top:349.00px;font-size:10px;color:#fff;transform:scale(0.9200,1.0000);">+</span>
<span class="t fm" style="left:47.24px;top:349.00px;font-size:10px;color:#fff;transform:scale(0.9200,1.0000);">+</span>
<span class="t fm" style="left:62.24px;top:349.00px;font-size:10px;color:#fff;transform:scale(0.9200,1.0000);">+</span>
<span class="t fm" style="left:77.24px;top:349.00px;font-size:10px;color:#fff;transform:scale(0.9200,1.0000);">+</span>
<span class="t fm" style="left:92.24px;top:349.00px;font-size:10px;color:#fff;transform:scale(0.9200,1.0000);">+</span>
<span class="t fm" style="left:107.24px;top:349.00px;font-size:10px;color:#fff;transform:scale(0.9200,1.0000);">+</span>
<span class="t fm" style="left:122.24px;top:349.00px;font-size:10px;color:#fff;transform:scale(0.9200,1.0000);">+</span>
<span class="t fm" style="left:137.24px;top:349.00px;font-size:10px;color:#fff;transform:scale(0.9200,1.0000);">+</span>
<span class="t fm" style="left:151.74px;top:349.00px;font-size:10px;color:#fff;transform:scale(0.9200,1.0000);">+</span>
<span class="t fm" style="left:166.24px;top:349.00px;font-size:10px;color:#fff;transform:scale(0.9200,1.0000);">+</span>
<span class="t fm" style="left:181.24px;top:349.00px;font-size:10px;color:#fff;transform:scale(0.9200,1.0000);">+</span>
<span class="t fm" style="left:196.24px;top:349.00px;font-size:10px;color:#fff;transform:scale(0.9200,1.0000);">+</span>
<span class="t fm" style="left:211.24px;top:349.00px;font-size:10px;color:#fff;transform:scale(0.9200,1.0000);">+</span>
<span class="t fm" style="left:226.24px;top:349.00px;font-size:10px;color:#fff;transform:scale(0.9200,1.0000);">+</span>
<span class="t fm" style="left:241.24px;top:349.00px;font-size:10px;color:#fff;transform:scale(0.9200,1.0000);">+</span>
<span class="t fm" style="left:256.24px;top:349.00px;font-size:10px;color:#fff;transform:scale(0.9200,1.0000);">+</span>
<span class="t fm" style="left:271.24px;top:349.00px;font-size:10px;color:#fff;transform:scale(0.9200,1.0000);">+</span>
<span class="t fm" style="left:286.24px;top:349.00px;font-size:10px;color:#fff;transform:scale(0.9200,1.0000);">+</span>
<span class="t fm" style="left:300.74px;top:349.00px;font-size:10px;color:#fff;transform:scale(0.9200,1.0000);">+</span>
<span class="t fm" style="left:315.24px;top:349.00px;font-size:10px;color:#fff;transform:scale(0.9200,1.0000);">+</span>
<span class="t fm" style="left:330.24px;top:349.00px;font-size:10px;color:#fff;transform:scale(0.9200,1.0000);">+</span>
<span class="t fm" style="left:345.24px;top:349.00px;font-size:10px;color:#fff;transform:scale(0.9200,1.0000);">+</span>
<span class="t fm" style="left:360.24px;top:349.00px;font-size:10px;color:#fff;transform:scale(0.9200,1.0000);">+</span>
<span class="t fm" style="left:375.24px;top:349.00px;font-size:10px;color:#fff;transform:scale(0.9200,1.0000);">+</span>
<span class="t fm" style="left:390.24px;top:349.00px;font-size:10px;color:#fff;transform:scale(0.9200,1.0000);">+</span>
<span class="t fm" style="left:405.24px;top:349.00px;font-size:10px;color:#fff;transform:scale(0.9200,1.0000);">+</span>
<span class="t fm" style="left:420.24px;top:349.00px;font-size:10px;color:#fff;transform:scale(0.9200,1.0000);">+</span>
<span class="t fm" style="left:435.24px;top:349.00px;font-size:10px;color:#fff;transform:scale(0.9200,1.0000);">+</span>
<span class="t fm" style="left:449.74px;top:349.00px;font-size:10px;color:#fff;transform:scale(0.9200,1.0000);">+</span>
<span class="t fm" style="left:464.24px;top:349.00px;font-size:10px;color:#fff;transform:scale(0.9200,1.0000);">+</span>
<span class="t fm" style="left:478.85px;top:348.00px;font-size:11.5px;color:#fff;transform:scale(0.8566,1.0000);">11</span>
<span class="t fm" style="left:508.84px;top:348.00px;font-size:11.5px;color:#fff;transform:scale(0.8742,1.0000);">13</span>
<span class="t fm" style="left:538.83px;top:348.00px;font-size:11.5px;color:#fff;transform:scale(0.8833,1.0000);">17</span>
</div>
<div class="abs" style="left:45px;top:93px;width:1000px;height:600px;box-sizing:border-box;border:1px solid #fbfbfc;border-top:1px solid #f4f5f6;pointer-events:none"></div>
<span class="t" style="left:447.50px;top:68.00px;font-size:11.2px;color:#8c8e90;transform:scale(1.0258,1.0000);will-change:transform;">Marker: 276400 ps</span>
<span class="t" style="left:550.20px;top:68.00px;font-size:11.2px;color:#8c8e90;will-change:transform;">|</span>
<span class="t" style="left:561.19px;top:68.00px;font-size:11.2px;color:#8c8e90;transform:scale(1.0193,1.0000);will-change:transform;">Cursor: 3300 ps</span>
</body></html>
